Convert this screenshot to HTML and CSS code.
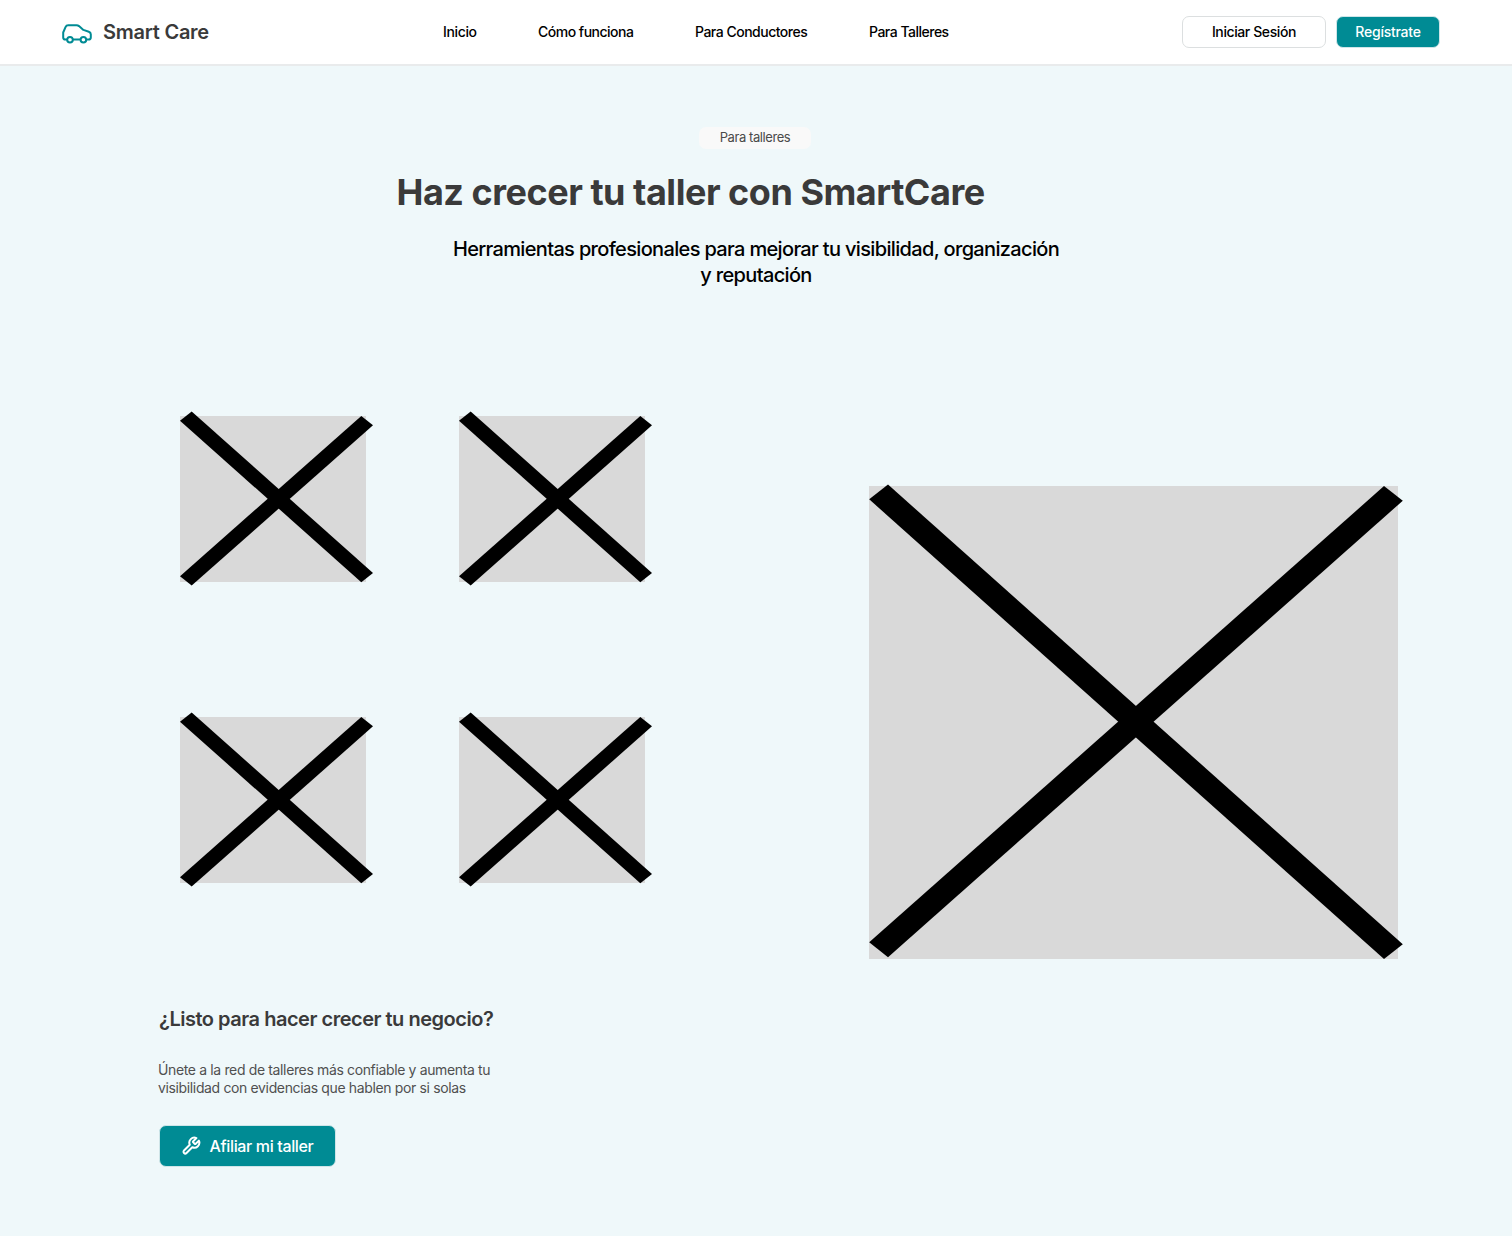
FILE: index.html
```html
<!DOCTYPE html>
<html lang="es">
<head>
<meta charset="utf-8">
<title>Smart Care</title>
<link rel="stylesheet" href="styles.css">
</head>
<body>
<header class="header">
  <a class="brand">
    <svg class="brand-icon" viewBox="0 0 30 20" fill="none" stroke="currentColor" stroke-width="2" stroke-linejoin="round" stroke-linecap="round"><path d="M4.8 15.6H3.4Q1.2 15.6 1.2 13.5V8.5L3.5 3.1Q4.3 1.3 6.2 1.3H14.6Q16 1.3 17 2.1L21.4 5.9L26.8 7.7Q28.8 8.4 28.8 10.3V13.5Q28.8 15.6 26.6 15.6H24.8M11.3 15.6H18.1"/><circle cx="8" cy="15.8" r="2.8"/><circle cx="21.4" cy="15.8" r="2.8"/></svg>
    <span class="brand-name">Smart Care</span>
  </a>
  <nav class="nav">
    <a class="nav-first">Inicio</a><a>Cómo funciona</a><a>Para Conductores</a><a>Para Talleres</a>
  </nav>
  <div class="actions">
    <button class="btn btn-outline">Iniciar Sesión</button>
    <button class="btn btn-solid">Regístrate</button>
  </div>
</header>
<main>
  <section class="hero">
    <span class="badge">Para talleres</span>
    <h1>Haz crecer tu taller con SmartCare</h1>
    <p class="lead">Herramientas profesionales para mejorar tu visibilidad, organización<br>y reputación</p>
  </section>
  <section class="gallery">
    <div class="tiles">
      <svg class="tile" viewBox="0 0 186 166"><rect width="186" height="166"/><path d="M0 4.7L11.7-4.5 193 157 181.3 166.2Z"/><path d="M0 160.3L11.7 169.5 193 9.3 181.3 0Z"/></svg>
      <svg class="tile" viewBox="0 0 186 166"><rect width="186" height="166"/><path d="M0 4.7L11.7-4.5 193 157 181.3 166.2Z"/><path d="M0 160.3L11.7 169.5 193 9.3 181.3 0Z"/></svg>
      <svg class="tile" viewBox="0 0 186 166"><rect width="186" height="166"/><path d="M0 4.7L11.7-4.5 193 157 181.3 166.2Z"/><path d="M0 160.3L11.7 169.5 193 9.3 181.3 0Z"/></svg>
      <svg class="tile" viewBox="0 0 186 166"><rect width="186" height="166"/><path d="M0 4.7L11.7-4.5 193 157 181.3 166.2Z"/><path d="M0 160.3L11.7 169.5 193 9.3 181.3 0Z"/></svg>
    </div>
    <svg class="tile tile-large" viewBox="0 0 529 473"><rect width="529" height="473"/><path d="M.2 13.3L19-1.5 533.8 458.3 515 473Z"/><path d="M.2 456.3L19 471.2 533.8 14.7 515 .1Z"/></svg>
  </section>
  <section class="cta">
    <h2>¿Listo para hacer crecer tu negocio?</h2>
    <p>Únete a la red de talleres más confiable y aumenta tu<br>visibilidad con evidencias que hablen por si solas</p>
    <button class="btn btn-solid btn-cta">
      <svg class="wrench" viewBox="0 0 24 24" fill="none" stroke="currentColor" stroke-width="2.4" stroke-linecap="round" stroke-linejoin="round"><path d="M14.7 6.3a1 1 0 0 0 0 1.4l1.6 1.6a1 1 0 0 0 1.4 0l3.77-3.77a6 6 0 0 1-7.94 7.94l-6.91 6.91a2.12 2.12 0 0 1-3-3l6.91-6.91a6 6 0 0 1 7.94-7.94l-3.76 3.76z"/></svg>
      <span>Afiliar mi taller</span>
    </button>
  </section>
</main>
</body>
</html>
```
FILE: styles.css
```css
* { box-sizing: border-box; }
body {
  margin: 0;
  min-height: 1236px;
  background: #eff8fa;
  font-family: Inter, "Liberation Sans", sans-serif;
  color: #000;
}
h1, h2, p { margin: 0; white-space: nowrap; }

.header {
  display: grid;
  grid-template-columns: 381px 1fr auto;
  align-items: center;
  height: 66px;
  padding: 0 72px 0 62px;
  background: #fff;
  border-bottom: 2px solid #e9ebec;
}
.brand { display: flex; align-items: center; gap: 11px; color: #008b94; }
.brand-icon { width: 30px; height: 20px; margin-top: 3px; }
.brand-name { color: #3a3a3a; font-size: 20px; font-weight: 600; letter-spacing: -0.25px; }
.nav {
  display: grid;
  grid-template-columns: 34px 96px 113px 81px;
  gap: 61px;
  padding-bottom: 2px;
  font-size: 14px;
  font-weight: 500;
  letter-spacing: -0.5px;
  white-space: nowrap;
}
.nav-first { letter-spacing: -0.35px; }
.actions { display: flex; align-items: center; gap: 10px; }
.btn {
  display: flex;
  align-items: center;
  justify-content: center;
  padding: 0;
  border: 1px solid #dcdfe0;
  border-radius: 7px;
  font: 500 14px Inter, "Liberation Sans", sans-serif;
  letter-spacing: -0.4px;
  white-space: nowrap;
}
.btn-outline { width: 144px; height: 32px; padding-bottom: 1px; background: #fff; color: #000; }
.btn-solid { width: 104px; height: 32px; padding-bottom: 1px; background: #008b94; color: #fff; border-color: #cfe5e8; letter-spacing: -0.25px; }

.hero { display: flex; flex-direction: column; align-items: center; padding-top: 61px; }
.badge {
  width: 112px;
  height: 22px;
  margin-right: 2px;
  border-radius: 7px;
  background: #f9f9f9;
  color: #4a4a4a;
  font-size: 13px;
  line-height: 21px;
  letter-spacing: -0.42px;
  text-align: center;
}
h1 {
  width: 588px;
  margin: 19px 131px 0 0;
  color: #3a3a3a;
  font-size: 36px;
  font-weight: 700;
  line-height: 48px;
  letter-spacing: -0.48px;
}
.lead {
  margin-top: 20px;
  font-size: 20px;
  font-weight: 500;
  line-height: 26px;
  letter-spacing: -0.66px;
  text-align: center;
}

.gallery {
  display: flex;
  justify-content: space-between;
  padding: 128px 114px 0 180px;
}
.tiles { display: grid; grid-template-columns: 186px 186px; gap: 135px 93px; align-content: start; }
.tile { display: block; width: 186px; height: 166px; overflow: visible; }
.tile rect { fill: #d9d9d9; }
.tile-large { width: 529px; height: 473px; margin-top: 70px; }

.cta { padding: 47px 0 0 158px; }
h2 {
  margin-left: 1px;
  color: #3a3a3a;
  font-size: 20px;
  font-weight: 600;
  line-height: 26px;
  letter-spacing: -0.48px;
}
.cta p {
  margin-top: 29px;
  color: #505050;
  font-size: 14px;
  line-height: 18px;
  letter-spacing: -0.36px;
}
.btn-cta {
  gap: 9px;
  width: 177px;
  height: 42px;
  margin: 28px 0 0 1px;
  padding: 0 1px 1px 0;
  font-size: 16px;
  letter-spacing: -0.35px;
}
.wrench { width: 20px; height: 20px; }
```
